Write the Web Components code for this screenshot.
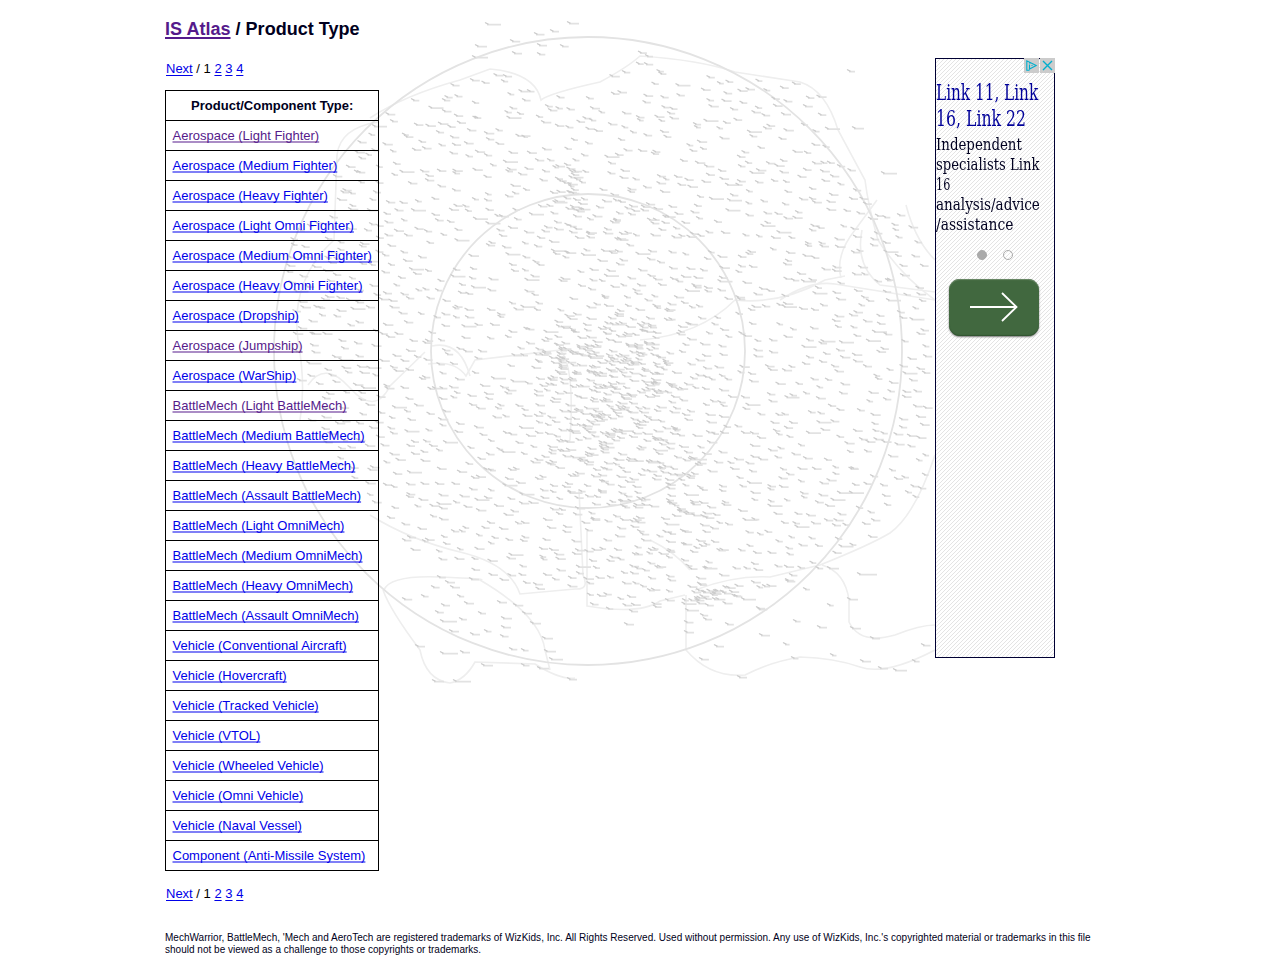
<!DOCTYPE html>
<html lang="en"><head><meta charset="utf-8"><title>IS Atlas / Product Type</title>
<style>html,body{margin:0;background:#fff}body{font:13px/16px "Liberation Sans",Arial,sans-serif;color:#000020}</style></head>
<body><atlas-page></atlas-page>
<script>
function define(name, html, setup){
  customElements.define(name, class extends HTMLElement{
    connectedCallback(){
      if(this.shadowRoot) return;
      this.attachShadow({mode:'open'}).innerHTML = html;
      if(setup) setup.call(this, this.shadowRoot);
    }
  });
}

/* Faded star chart: province borders, range circles and system labels. */
define('star-map', `<style>:host{display:block;width:935px;height:700px;overflow:hidden}svg{display:block}#stars{filter:blur(.5px)}</style>
<svg width="935" height="700" fill="none">
<g stroke="#eeeeee" stroke-width="1.6">
<path d="M370 118Q405 95 460 80L490 69Q535 73 541 100Q550 93 600 82Q628 67 640 56Q700 60 735 72L800 82Q826 90 838 130L865 180Q868 205 878 240Q900 275 935 300"/>
<path d="M378 122Q340 128 337 155L334 240Q290 280 298 340Q306 385 300 420M308 385Q325 360 350 388T390 386L425 352M428 364Q455 360 466 376L475 360L560 350Q575 365 570 440"/>
<path d="M432 346Q460 340 470 376M640 340Q700 335 735 300Q780 305 825 280L845 276M780 300Q810 280 835 284L935 300M841 278Q835 255 855 230L877 200M862 230Q855 265 880 285L935 292M906 205Q915 240 935 260"/>
<path d="M370 515Q410 540 460 552T520 594L575 589Q590 590 583 575L579 490M587 530V606Q640 615 660 601L685 595M384 590Q390 575 440 577T480 580Q540 615 545 650L550 670M383 590Q390 610 420 650Q426 680 450 683Q465 680 475 662L535 664Q560 680 575 678"/>
<path d="M695 590Q735 575 770 577L820 565Q870 545 890 533Q915 515 935 455M690 570Q675 552 650 540M686 595V650Q710 678 745 675Q770 662 800 657Q835 658 860 667T935 650M822 565Q845 572 849 600V622Q860 645 895 635Q920 625 935 625"/>
</g>
<g stroke="#e3e3e3" stroke-width="1.8"><circle cx="588" cy="351" r="314"/><circle cx="588" cy="351" r="157"/></g>
<g id="stars" stroke-linecap="butt"></g>
</svg>`, function(root){
  let seed = 20871;
  const rnd = () => ((seed = (seed*1664525+1013904223)>>>0)/4294967296);
  const poly = [[372,112],[440,92],[462,67],[520,70],[542,98],[600,86],[640,50],[668,60],[725,78],[790,80],[825,96],[842,150],[868,198],[905,212],[932,240],[932,480],[905,510],[862,545],[812,572],[770,590],[728,606],[690,604],[640,612],[590,606],[582,586],[515,592],[470,570],[400,545],[375,508],[335,470],[300,400],[292,300],[284,235],[322,205],[332,150]];
  const inside = (x,y) => {let c=false;for(let i=0,j=poly.length-1;i<poly.length;j=i++){const [a,b]=poly[i],[d,e]=poly[j];if((b>y)!==(e>y)&&x<(d-a)*(y-b)/(e-b)+a)c=!c;}return c;};
  let dots='', words='';
  const star = (x,y,long) => {
    const w = long || 4.5+rnd()*4;
    x=Math.round(x*2)/2; y=Math.round(y*2)/2;
    dots += `M${x-3} ${y-1.5}l3.500 1.800`;
    words += `M${x-1} ${y+.7}h${w.toFixed(1)}`;
  };
  for(let y=50;y<612;y+=9) for(let x=285+rnd()*12;x<930;x+=16.5){
    const px=x+rnd()*11-5, py=y+rnd()*10-5;
    if(inside(px,py)&&rnd()<.8) star(px,py,rnd()<.06?13:0);
  }
  const g=()=>rnd()+rnd()+rnd()-1.5;
  for(const [cx,cy,sx,sy,n] of [[620,385,75,80,220],[610,455,90,75,80],[573,190,16,30,20],[565,355,35,30,35],[712,596,24,12,24],[615,215,70,45,35],[660,520,75,75,65]])
    for(let i=0;i<n;i++) star(cx+g()*sx,cy+g()*sy);
  for(const [x,y,w] of [[488,24,14],[570,23,10],[553,31],[537,34],[513,41],[478,46,10],[540,45,8],[563,46],[475,57,14],[515,53,8],[540,54],[850,71],[855,128,10],[884,173,14],[448,582,8],[440,577],[472,579,8],[405,599],[434,587],[453,587],[424,596],[460,596],[467,603,8],[444,605],[500,602,8],[516,605],[525,613,8],[443,621,15],[438,612],[462,619],[481,613],[504,618,9],[504,627],[452,631,8],[473,634,8],[487,631],[503,636],[533,623,9],[545,638,9],[418,646,8],[443,653,16],[463,652,8],[512,649],[524,650],[547,651,10],[552,659,12],[484,665,10],[524,665],[540,668,10],[570,679,8],[435,681,10],[456,681,16],[627,624,8],[632,611],[685,600],[688,610,12],[687,622],[687,632,8],[717,646,8],[702,659],[703,615],[706,619],[728,624],[759,608],[765,586],[788,581],[806,589],[796,621],[820,627,8],[762,635,9],[786,644],[760,609],[830,605],[833,655],[850,599,9],[860,574,18],[830,568,10],[853,628,9],[873,638,8],[863,661,9],[881,668,8],[896,670,12],[915,661],[924,645],[740,677,8],[794,658]]) star(x,y,w);
  root.querySelector('#stars').innerHTML = `<path d="${words}" stroke="#e2e2e2" stroke-width="1.8"/><path d="${dots}" stroke="#cccccc" stroke-width="1.4"/>`;
});

define('page-links', `<style>:host{display:block;color:#000;white-space:nowrap;line-height:16px}a{color:#0000e8;text-decoration:underline;text-decoration-skip-ink:none;text-underline-offset:1.5px}</style><a href="#">Next</a> / 1 <a href="#">2</a> <a href="#">3</a> <a href="#">4</a>`);

const rowStyle = `<style>:host{display:block;box-sizing:border-box;height:30px;padding:7px 6px 0 6.5px;border-bottom:1px solid #000;white-space:nowrap;line-height:16px}
a{color:#0000e8;text-decoration:underline;text-decoration-thickness:2px;text-decoration-color:#0000ee80;text-decoration-skip-ink:none;text-underline-offset:1px}
:host([visited]) a{color:#551a8b;text-decoration-color:#551a8b80}</style>`;
define('type-row', rowStyle + '<a href="#"><slot></slot></a>');
define('type-head', rowStyle + '<style>:host{font-weight:bold;text-align:center}</style><slot></slot>');

const rows = ['*Aerospace (Light Fighter)','Aerospace (Medium Fighter)','Aerospace (Heavy Fighter)','Aerospace (Light Omni Fighter)','Aerospace (Medium Omni Fighter)','Aerospace (Heavy Omni Fighter)','Aerospace (Dropship)','*Aerospace (Jumpship)','Aerospace (WarShip)','*BattleMech (Light BattleMech)','BattleMech (Medium BattleMech)','BattleMech (Heavy BattleMech)','BattleMech (Assault BattleMech)','BattleMech (Light OmniMech)','BattleMech (Medium OmniMech)','BattleMech (Heavy OmniMech)','BattleMech (Assault OmniMech)','Vehicle (Conventional Aircraft)','Vehicle (Hovercraft)','Vehicle (Tracked Vehicle)','Vehicle (VTOL)','Vehicle (Wheeled Vehicle)','Vehicle (Omni Vehicle)','Vehicle (Naval Vessel)','Component (Anti-Missile System)'];
define('type-table', `<style>:host{display:block;box-sizing:border-box;width:214px;border:1px solid #000;border-bottom:0}</style>
<type-head>Product/Component Type:</type-head>${rows.map(r=>r[0]==='*'?`<type-row visited>${r.slice(1)}</type-row>`:`<type-row>${r}</type-row>`).join('')}`);

/* A line of condensed type, squeezed to the width it is given. */
define('fit-line', `<style>:host{display:block;white-space:nowrap}span{display:inline-block;transform-origin:0 50%}</style><span><slot></slot></span>`, function(root){
  const s=root.querySelector('span');
  s.style.transform=`scaleX(${this.getAttribute('width')/s.offsetWidth})`;
});

define('side-ad', `<style>
:host{display:block;position:relative;box-sizing:border-box;width:120px;height:600px;border:1px solid #000033;padding-top:21px;
background:url("data:image/svg+xml,%3Csvg xmlns='http://www.w3.org/2000/svg' width='4' height='4' shape-rendering='crispEdges' fill='%23e4e4e4'%3E%3Cpath d='M3 0h1v1h-1zM2 1h1v1h-1zM1 2h1v1h-1zM0 3h1v1h-1z'/%3E%3C/svg%3E") #fff;font-family:"DejaVu Serif",serif;font-weight:300}
.t{font-size:22px;line-height:26px;color:#000099;padding-left:.4px}.b{font-size:16px;line-height:20px;color:#000020;padding:3px 0 0 .4px}
.dots{display:flex;gap:16px;padding:15px 0 0 41px}.dots i{box-sizing:border-box;width:10px;height:10px;border:1px solid #aaa;border-radius:50%}.dots i:first-child{background:#aaa}
.go{display:block;margin:19px 0 0 13px;width:90px;height:57px;border-radius:11px;background:#41683f;box-shadow:inset 0 1px 1px #6d8b6a,inset 0 -1px 1px #315430,0 1px 2px #777}
.c{position:absolute;top:-1px;right:-1px;display:flex;gap:1px}.c svg{background:#ccc;display:block}
</style>
<div class="c"><svg width="15" height="15" fill="none" stroke="#00aecd" stroke-width="1.1"><path d="M5.500 12.200H2.800V2.800L12.200 7.500 5.500 11V6.500M5.500 4.500v1M7.500 7.500h1"/></svg><svg width="15" height="15" fill="none" stroke="#00aecd" stroke-width="1.4"><path d="m3 3 9 9m0-9-9 9"/></svg></div>
<div class="t"><fit-line width="102">Link 11, Link</fit-line><fit-line width="90">16, Link 22</fit-line></div>
<div class="b"><fit-line width="86">Independent</fit-line><fit-line width="103">specialists Link</fit-line><fit-line width="14">16</fit-line><fit-line width="104">analysis/advice</fit-line><fit-line width="77">/assistance</fit-line></div>
<div class="dots"><i></i><i></i></div>
<div class="go"><svg width="90" height="57" fill="none" stroke="#fff" stroke-width="1.8"><path d="M21 28h47M53 14 67.500 28 53 42"/></svg></div>`);

define('atlas-page', `<style>
:host{display:block;position:relative;isolation:isolate;box-sizing:border-box;height:971px;padding:19px 0 0 165px;overflow:hidden}
star-map{position:absolute;left:0;top:0;z-index:-1}
h1{margin:0;font-size:18px;line-height:20px;letter-spacing:.02px}h1 a{color:#551a8b;text-decoration-thickness:2px;text-underline-offset:2px}
.row{display:flex;gap:556px;padding-top:19px}
page-links{padding-left:1px}.left{padding-top:3px}type-table{margin:13px 0 15px}
side-ad{flex:none}
footer{width:935px;margin-top:30px;font-size:10px;line-height:12px;letter-spacing:.014px}
</style>
<star-map></star-map>
<h1><a href="#">IS Atlas</a> / Product Type</h1>
<div class="row"><div class="left"><page-links></page-links><type-table></type-table><page-links></page-links></div><side-ad></side-ad></div>
<footer>MechWarrior, BattleMech, 'Mech and AeroTech are registered trademarks of WizKids, Inc. All Rights Reserved. Used without permission. Any use of WizKids, Inc.'s copyrighted material or trademarks in this file<br>should not be viewed as a challenge to those copyrights or trademarks.</footer>`);
</script></body></html>
